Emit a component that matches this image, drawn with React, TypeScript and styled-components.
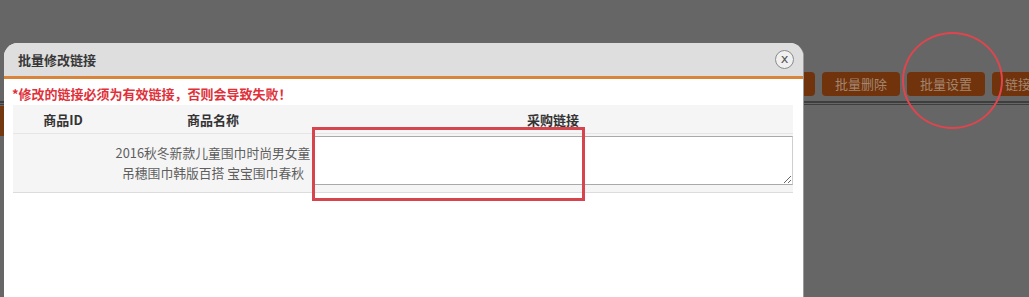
import React from "react";
import styled, { createGlobalStyle } from "styled-components";

const Global = createGlobalStyle`
  html, body { margin: 0; padding: 0; background: #666666; }
  body { font-family: "Noto Sans CJK SC", "Microsoft YaHei", "Noto Sans", sans-serif; }
`;

const Page = styled.div`
  position: relative;
  width: 1029px;
  height: 297px;
  overflow: hidden;
  background: #666666;
`;

const Toolbar = styled.div`
  display: flex;
  gap: 7px;
  padding: 72px 0 0 737px;
  white-space: nowrap;
  overflow: hidden;
`;

const BgButton = styled.div`
  flex: 0 0 78px;
  height: 24px;
  border-radius: 4px;
  background: #70330c;
  color: #a38670;
  font-size: 13px;
  line-height: 24px;
  text-align: center;
`;

const Rule = styled.div`
  margin-top: 5px;
  height: 1px;
  border-top: 2px solid #3e3e3e;
  border-bottom: 1px solid #3e3e3e;
`;

const TabStrip = styled.div`
  width: 200px;
  height: 30px;
  margin-top: 1px;
  background: #73380f;
`;

const Dialog = styled.div`
  position: absolute;
  left: 4px;
  top: 43px;
  width: 799px;
  height: 280px;
  background: #ffffff;
  border-radius: 14px 14px 0 0;
  border-right: 1px solid #9a9a9a;
  overflow: hidden;
`;

const Header = styled.div`
  display: flex;
  align-items: center;
  justify-content: space-between;
  height: 33px;
  padding: 0 9px 0 14px;
  background: #dedede;
  border-bottom: 3px solid #d8843a;
`;

const Title = styled.div`
  font-size: 13px;
  font-weight: bold;
  color: #383838;
`;

const Close = styled.div`
  width: 17px;
  height: 17px;
  border: 1px solid #8a8a8a;
  border-radius: 50%;
  background: #f0f0f0;
  color: #555555;
  font-family: "DejaVu Sans", sans-serif;
  font-size: 13px;
  line-height: 15px;
  text-align: center;
`;

const Body = styled.div`
  padding: 0 10px 0 8px;
`;

const Warning = styled.div`
  padding: 6px 0 2px;
  line-height: 18px;
  font-size: 13px;
  font-weight: bold;
  color: #e0313a;
`;

const Table = styled.div`
  margin-left: 1px;
  width: 780px;
`;

const Row = styled.div<{ $head?: boolean }>`
  display: grid;
  grid-template-columns: 100px 200px 1fr;
  align-items: center;
  background: #f5f5f5;
  border-bottom: 1px solid ${(p) => (p.$head ? "#e6e6e6" : "#dcdcdc")};
  height: ${(p) => (p.$head ? "28px" : "58px")};
`;

const HeadCell = styled.div`
  text-align: center;
  font-size: 13px;
  font-weight: bold;
  color: #333333;
`;

const NameCell = styled.div`
  text-align: center;
  font-size: 12.8px;
  line-height: 20px;
  color: #5e5e5e;
  white-space: nowrap;
`;

const LinkCell = styled.div`
  align-self: start;
  padding-top: 2px;
`;

const LinkInput = styled.textarea`
  display: block;
  box-sizing: border-box;
  width: 100%;
  height: 49px;
  margin: 0;
  border: 1px solid #a9a9a9;
  border-right-color: #cfcfcf;
  background: #ffffff;
  resize: both;
  font-size: 12px;
`;

const MarkRect = styled.div`
  position: absolute;
  left: 312px;
  top: 127px;
  width: 267px;
  height: 68px;
  border: 3px solid #d6444d;
`;

const MarkCircle = styled.div`
  position: absolute;
  left: 902px;
  top: 32px;
  width: 97px;
  height: 93px;
  border: 2.5px solid #e0454d;
  border-radius: 50%;
`;

export default function App() {
  return (
    <Page>
      <Global />
      <Toolbar>
        <BgButton>批量下单</BgButton>
        <BgButton>批量删除</BgButton>
        <BgButton>批量设置</BgButton>
        <BgButton>链接关联</BgButton>
      </Toolbar>
      <Rule />
      <TabStrip />
      <Dialog>
        <Header>
          <Title>批量修改链接</Title>
          <Close>x</Close>
        </Header>
        <Body>
          <Warning>*修改的链接必须为有效链接，否则会导致失败！</Warning>
          <Table>
            <Row $head>
              <HeadCell>商品ID</HeadCell>
              <HeadCell>商品名称</HeadCell>
              <HeadCell>采购链接</HeadCell>
            </Row>
            <Row>
              <div />
              <NameCell>
                2016秋冬新款儿童围巾时尚男女童
                <br />
                吊穗围巾韩版百搭 宝宝围巾春秋
              </NameCell>
              <LinkCell>
                <LinkInput />
              </LinkCell>
            </Row>
          </Table>
        </Body>
      </Dialog>
      <MarkRect />
      <MarkCircle />
    </Page>
  );
}
